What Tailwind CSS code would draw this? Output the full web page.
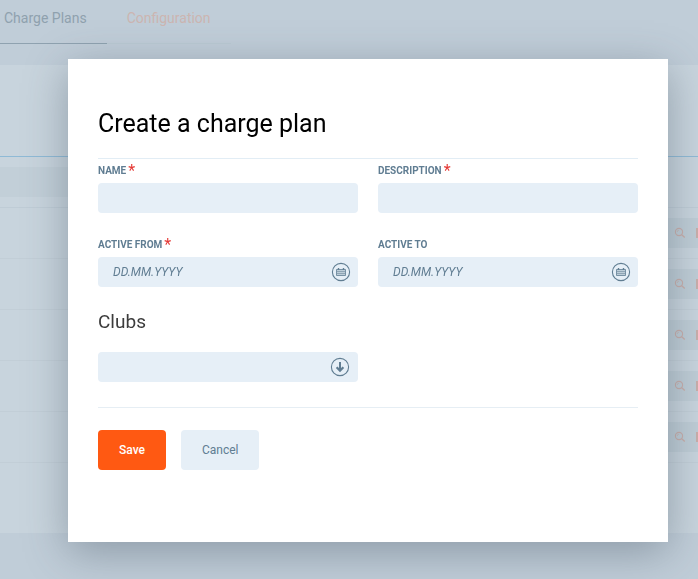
<!DOCTYPE html>
<html lang="en">
<head>
<meta charset="utf-8">
<meta name="viewport" content="width=device-width, initial-scale=1">
<title>Create a charge plan</title>
<script src="https://cdn.jsdelivr.net/npm/@tailwindcss/browser@4"></script>
</head>
<body class="min-h-screen overflow-hidden bg-[#c0cdd8] font-[Roboto,sans-serif]">
<svg class="hidden" aria-hidden="true">
  <symbol id="search" viewBox="0 0 12 12"><g fill="none" stroke="currentColor"><circle cx="5" cy="5" r="3.6" stroke-width="1.1"/><path d="M7.7 7.7 10.8 10.6" stroke-width="1.4"/><path d="M3.2 4.8Q3.4 3.4 4.8 3.2" stroke-width=".8"/></g></symbol>
  <symbol id="edit" viewBox="0 0 12 12"><path d="M1 2h10v8H1zM1 6h10" fill="none" stroke="currentColor" stroke-width="2"/></symbol>
  <symbol id="calendar" viewBox="0 0 20 20"><circle cx="10" cy="10" r="8.6" fill="none" stroke="currentColor" stroke-width="1.1"/><path d="M5.5 7.5h9v6h-9z" fill="currentColor" fill-opacity=".3" stroke="currentColor" stroke-width=".8"/><path d="M7.5 6v2M12.5 6v2" stroke="currentColor" stroke-width="1.4"/><path d="M6 9.5h8M6 11.5h8" stroke="currentColor" stroke-width=".5"/></symbol>
  <symbol id="arrow" viewBox="0 0 20 20"><g fill="none" stroke="currentColor"><circle cx="10" cy="10" r="8.6" stroke-width="1.1"/><path d="M10 5v8.5" stroke-width="2"/><path d="M6.6 10.2 10 13.6 13.4 10.2" stroke-width="2.2"/></g></symbol>
</svg>

<nav class="flex h-11 text-sm">
  <a href="#plans" class="-ml-4 border-b border-[#8fa2b0] px-5 pt-2 text-[#8fa1ae]">Charge Plans</a>
  <a href="#config" class="border-b border-[#bbc9d3] px-5 pt-2 text-[#ccb5b1]">Configuration</a>
</nav>
<main class="mt-[21px] h-[468px] bg-[#c8d4dd] pt-[91px]">
  <div class="border-t border-[#8fbad6] pt-2.5">
    <div class="h-[30px] w-1/2 bg-[#c2cfd8]"></div>
  </div>
  <ul class="mt-2.5 border-t border-[#bfccd6]">
    <li class="flex h-[51px] items-center justify-end border-b border-[#c2ced7]"><div class="-mr-5 flex h-[30px] items-center gap-2.5 bg-[#bfcdd6] pr-2.5 pl-3 text-[#c8aeaa]"><button aria-label="View"><svg class="block size-3"><use href="#search"/></svg></button><button aria-label="Edit"><svg class="block size-3"><use href="#edit"/></svg></button></div></li>
    <li class="flex h-[51px] items-center justify-end border-b border-[#c2ced7]"><div class="-mr-5 flex h-[30px] items-center gap-2.5 bg-[#bfcdd6] pr-2.5 pl-3 text-[#c8aeaa]"><button aria-label="View"><svg class="block size-3"><use href="#search"/></svg></button><button aria-label="Edit"><svg class="block size-3"><use href="#edit"/></svg></button></div></li>
    <li class="flex h-[51px] items-center justify-end border-b border-[#c2ced7]"><div class="-mr-5 flex h-[30px] items-center gap-2.5 bg-[#bfcdd6] pr-2.5 pl-3 text-[#c8aeaa]"><button aria-label="View"><svg class="block size-3"><use href="#search"/></svg></button><button aria-label="Edit"><svg class="block size-3"><use href="#edit"/></svg></button></div></li>
    <li class="flex h-[51px] items-center justify-end border-b border-[#c2ced7]"><div class="-mr-5 flex h-[30px] items-center gap-2.5 bg-[#bfcdd6] pr-2.5 pl-3 text-[#c8aeaa]"><button aria-label="View"><svg class="block size-3"><use href="#search"/></svg></button><button aria-label="Edit"><svg class="block size-3"><use href="#edit"/></svg></button></div></li>
    <li class="flex h-[51px] items-center justify-end border-b border-[#c2ced7]"><div class="-mr-5 flex h-[30px] items-center gap-2.5 bg-[#bfcdd6] pr-2.5 pl-3 text-[#c8aeaa]"><button aria-label="View"><svg class="block size-3"><use href="#search"/></svg></button><button aria-label="Edit"><svg class="block size-3"><use href="#edit"/></svg></button></div></li>
  </ul>
</main>

<div class="fixed inset-0 flex items-start pt-[59px] pr-[30px] pl-[68px]">
  <form role="dialog" aria-labelledby="title" class="flex-1 bg-white px-[30px] pt-12 pb-[72px] text-[#607d92] shadow-[0_10px_40px_rgba(60,75,90,0.4)]">
    <h1 id="title" class="text-[25px] leading-[33px] text-black">Create a charge plan</h1>
    <div class="mt-[18px] grid grid-cols-2 gap-5 border-t border-[#e2edf5]">
      <div>
        <label for="name" class="flex h-6 gap-0.5 text-[10px] leading-6 font-bold">NAME <span class="text-base leading-6 font-normal text-[#e53935]">*</span></label>
        <input id="name" type="text" required class="block h-[30px] w-full rounded bg-[#e6eff7] px-[15px] text-xs">
      </div>
      <div>
        <label for="desc" class="flex h-6 gap-0.5 text-[10px] leading-6 font-bold">DESCRIPTION <span class="text-base leading-6 font-normal text-[#e53935]">*</span></label>
        <input id="desc" type="text" required class="block h-[30px] w-full rounded bg-[#e6eff7] px-[15px] text-xs">
      </div>
      <div>
        <label for="from" class="flex h-6 gap-0.5 text-[10px] leading-6 font-bold">ACTIVE FROM <span class="text-base leading-6 font-normal text-[#e53935]">*</span></label>
        <div class="flex h-[30px] items-center rounded bg-[#e6eff7] pr-[7px] pl-[15px]">
          <input id="from" type="text" required placeholder="DD.MM.YYYY" class="min-w-0 flex-1 text-xs italic placeholder:text-[#607d92]">
          <button type="button" aria-label="Choose start date"><svg class="block size-5"><use href="#calendar"/></svg></button>
        </div>
      </div>
      <div>
        <label for="to" class="flex h-6 gap-0.5 text-[10px] leading-6 font-bold">ACTIVE TO</label>
        <div class="flex h-[30px] items-center rounded bg-[#e6eff7] pr-[7px] pl-[15px]">
          <input id="to" type="text" placeholder="DD.MM.YYYY" class="min-w-0 flex-1 text-xs italic placeholder:text-[#607d92]">
          <button type="button" aria-label="Choose end date"><svg class="block size-5"><use href="#calendar"/></svg></button>
        </div>
      </div>
      <div>
        <label for="clubs" class="mb-[15px] block text-[19px] leading-[30px] text-[#3c3c3c]">Clubs</label>
        <div class="grid h-[30px] items-center rounded bg-[#e6eff7]">
          <select id="clubs" class="col-start-1 row-start-1 h-full w-full appearance-none px-[15px] text-xs"><option></option></select>
          <svg class="pointer-events-none col-start-1 row-start-1 mr-2 size-5 justify-self-end" aria-hidden="true"><use href="#arrow"/></svg>
        </div>
      </div>
    </div>
    <div class="mt-[25px] flex gap-[15px] border-t border-[#e6eef4] pt-[22px] text-xs">
      <button type="submit" class="h-10 rounded bg-[#ff5912] px-[21px] font-medium text-white">Save</button>
      <button type="button" class="h-10 rounded bg-[#e6eff7] px-[21px]">Cancel</button>
    </div>
  </form>
</div>
</body>
</html>
